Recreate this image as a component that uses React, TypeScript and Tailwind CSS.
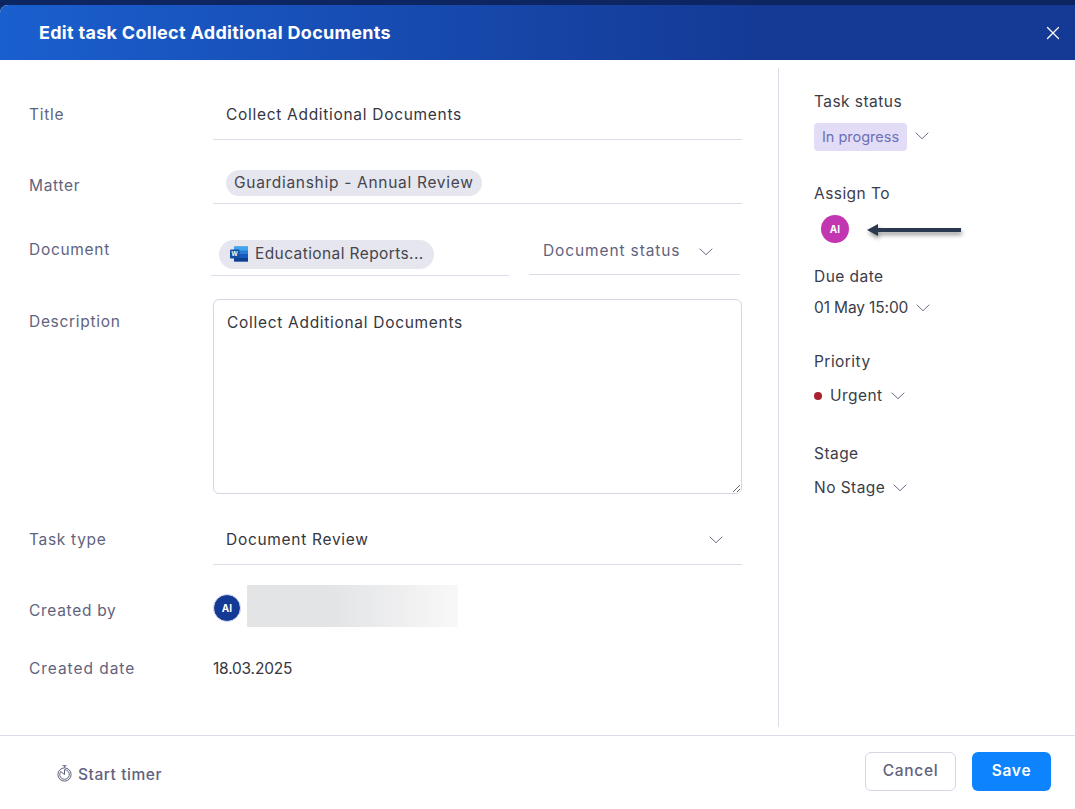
import React from "react";
import { X } from "lucide-react";

function Chev({ className = "" }: { className?: string }) {
  return (
    <svg width="14" height="8" viewBox="0 0 14 8" fill="none" className={className}>
      <path d="M0.7 0.7 L7 6.7 L13.3 0.7" stroke="#6b6f8a" strokeWidth="1" />
    </svg>
  );
}
function Word() {
  return (
    <svg width="18" height="16" viewBox="0 0 18 16">
      <rect x="4" y="0.5" width="14" height="15" rx="1" fill="#2b7cd3" />
      <rect x="4" y="0.5" width="14" height="4" fill="#41a5ee" />
      <rect x="4" y="8" width="14" height="4" fill="#185abd" />
      <rect x="4" y="12" width="14" height="3.5" fill="#103f91" />
      <rect x="0" y="3.5" width="9.5" height="9" rx="1" fill="#11509f" />
      <text x="4.7" y="10.4" fontSize="6.5" fontWeight="700" fill="#fff" textAnchor="middle" fontFamily="Liberation Sans">W</text>
    </svg>
  );
}
function Stopwatch() {
  return (
    <svg width="15" height="17" viewBox="0 0 15 17" fill="none" stroke="#5f637e" strokeWidth="1">
      <path d="M5.5 0.7 H9.5 M7.5 0.7 V2.7" />
      <circle cx="7.5" cy="9.5" r="6.6" />
      <path d="M7.5 4.7 A4.8 4.8 0 1 1 3.7 6.6 L7.5 9.5 Z" />
    </svg>
  );
}
function Label({ children }: { children: React.ReactNode }) {
  return <div className="w-[184px] shrink-0 mt-[34px] h-6 leading-6 text-[#5f637e]">{children}</div>;
}
function Side({ children, mt }: { children: React.ReactNode; mt: string }) {
  return <div className={`h-6 leading-6 text-[#3b3c4a] ${mt}`}>{children}</div>;
}

export default function App() {
  return (
    <div className="h-screen w-full overflow-hidden bg-[#0d2560] pt-[5px] font-['Inter',sans-serif] text-[15.5px] tracking-[0.7px] text-[#36363f]">
      <div className="flex h-full flex-col overflow-hidden rounded-tl-lg bg-white">
        <header className="flex h-[55px] shrink-0 items-center justify-between bg-gradient-to-r from-[#1a5fcf] to-[#143a96] to-70% pl-[39px] pr-[11px]">
          <h1 className="text-[18px] font-bold tracking-[0.29px] text-white">Edit task Collect Additional Documents</h1>
          <X size={22} strokeWidth={1.3} className="text-white" />
        </header>

        <div className="flex min-h-0 flex-1">
          <div className="w-[778px] shrink-0 pl-[29px] pr-[36px] pt-[30px]">
            <div className="flex h-[50px] items-center">
              <div className="w-[184px] shrink-0 text-[#5f637e]">Title</div>
              <div className="flex h-full flex-1 items-center border-b border-[#dcdbe8] pl-[13px]">Collect Additional Documents</div>
            </div>
            <div className="flex h-[64px] items-start">
              <Label>Matter</Label>
              <div className="h-full flex-1 border-b border-[#dcdbe8] pl-[13px] pt-[30px]">
                <span className="inline-flex h-[26px] w-[256px] items-center rounded-full bg-[#e6e6ee] pl-[8px] text-[#45454f]">Guardianship - Annual Review</span>
              </div>
            </div>
            <div className="flex h-[72px] items-start">
              <Label>Document</Label>
              <div className="-ml-[2px] flex h-full flex-1">
                <div className="h-full w-[298px] border-b border-[#dcdbe8] pl-[8px] pt-[36px]">
                  <span className="inline-flex h-[29px] w-[215px] items-center gap-[7px] rounded-full bg-[#e6e6ee] pb-[1px] pl-[11px] tracking-[0.4px] text-[#45454f]">
                    <Word />
                    Educational Reports...
                  </span>
                </div>
                <div className="ml-[20px] flex h-[71px] w-[211px] items-start justify-between border-b border-[#dcdbe8] pl-[14px] pr-[27px] pt-[35px] tracking-[0.88px] text-[#5f637e]">
                  <span className="h-6 leading-6">Document status</span>
                  <Chev className="mt-[9px]" />
                </div>
              </div>
            </div>
            <div className="flex h-[218px] items-start">
              <Label>Description</Label>
              <textarea
                defaultValue="Collect Additional Documents"
                className="mt-[23px] h-[195px] flex-1 rounded-md border border-[#d6d5e3] px-[13px] py-[11px] leading-6 text-[#36363f] outline-none"
              />
            </div>
            <div className="mt-[20px] flex h-[51px] items-center">
              <div className="w-[184px] shrink-0 text-[#5f637e]">Task type</div>
              <div className="flex h-full flex-1 items-center justify-between border-b border-[#dcdbe8] pl-[13px] pr-[19px] pt-[2px]">
                <span>Document Review</span>
                <Chev />
              </div>
            </div>
            <div className="flex h-[62px] items-start">
              <Label>Created by</Label>
              <div className="mt-[20px] flex items-start gap-[6px]">
                <div className="mt-[9px] flex h-[28px] w-[28px] items-center justify-center rounded-full border border-[#dfe3f2] bg-[#143a96] text-[10px] font-bold tracking-normal text-white">AI</div>
                <div className="h-[42px] w-[211px] bg-gradient-to-r from-[#e3e4e6] from-40% to-[#f8f8f8]" />
              </div>
            </div>
            <div className="mt-[30px] flex h-6 items-center">
              <div className="w-[184px] shrink-0 tracking-[0.95px] text-[#5f637e]">Created date</div>
              <div className="tracking-[-0.2px]">18.03.2025</div>
            </div>
          </div>

          <aside className="my-[8px] flex-1 border-l border-[#dcdbe8] pl-[35px] pt-[22px] tracking-[0.45px]">
            <Side mt="">Task status</Side>
            <div className="mt-[9px] flex items-center gap-[8px]">
              <span className="flex h-[28px] w-[93px] items-center justify-center rounded-[4px] bg-[#e2dcf6] text-[14.5px] tracking-normal text-[#6c70b6]">In progress</span>
              <Chev className="-mt-[3px]" />
            </div>
            <Side mt="mt-[31px]">Assign To</Side>
            <div className="mt-[9px] flex items-center pl-[7px]">
              <div className="flex h-[28px] w-[28px] items-center justify-center rounded-full bg-[#c237b1] text-[10px] font-bold tracking-normal text-white">AI</div>
              <svg width="94" height="12" viewBox="0 0 94 12" className="ml-[18px] mt-[2px] overflow-visible drop-shadow-[1px_3px_2px_rgba(0,0,0,0.4)]">
                <path d="M0 6 L11 0 V4 H94 V8 H11 V12 Z" fill="#2a3850" />
              </svg>
            </div>
            <Side mt="mt-[22px]">Due date</Side>
            <div className="mt-[7px] flex h-6 items-center gap-[8px] leading-6 tracking-[-0.13px] text-[#3b3c4a]">
              01 May 15:00 <Chev />
            </div>
            <Side mt="mt-[30px]">Priority</Side>
            <div className="mt-[10px] flex h-6 items-center leading-6 text-[#3b3c4a]">
              <span className="mr-[8px] h-[8px] w-[8px] rounded-full bg-[#a8212f]" />
              Urgent
              <Chev className="ml-[8px]" />
            </div>
            <Side mt="mt-[34px]">Stage</Side>
            <div className="mt-[10px] flex h-6 items-center gap-[8px] leading-6 text-[#3b3c4a]">
              No Stage <Chev />
            </div>
          </aside>
        </div>

        <footer className="flex h-[74px] shrink-0 items-center justify-between border-t border-[#dcdbe8] pb-[3px] pl-[57px] pr-[24px]">
          <div className="mt-[8px] flex items-center gap-[6px] font-medium tracking-[0.55px] text-[#5f637e]">
            <span className="-mt-[3px] flex"><Stopwatch /></span>
            Start timer
          </div>
          <div className="flex items-center gap-[16px]">
            <button className="h-[39px] w-[91px] rounded-md border border-[#d6d5e3] bg-white font-medium text-[#5f637e]">Cancel</button>
            <button className="h-[39px] w-[79px] rounded-md bg-[#0d84fe] font-semibold text-white">Save</button>
          </div>
        </footer>
      </div>
    </div>
  );
}
